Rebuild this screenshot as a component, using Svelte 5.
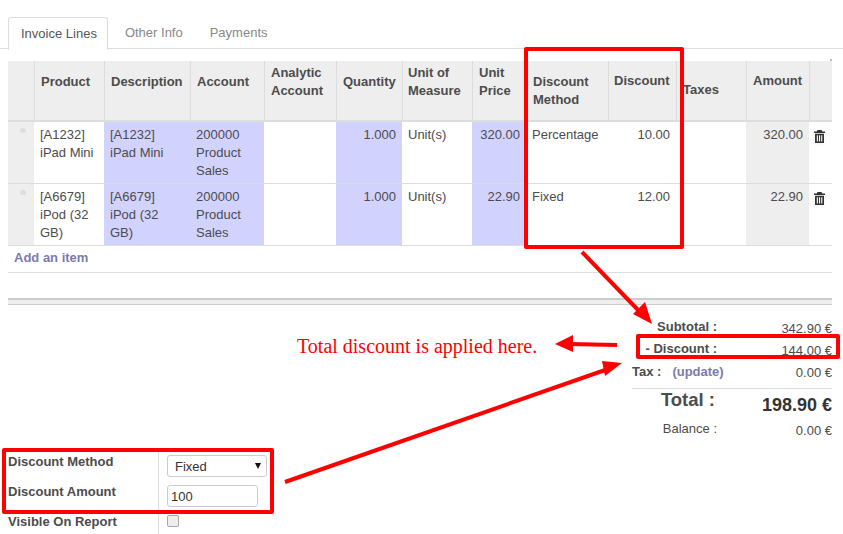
<script lang="ts">
const rows = [
  { code: "[A1232]", name: "iPad Mini", method: "Percentage", disc: "10.00", price: "320.00", amount: "320.00" },
  { code: "[A6679]", name: "iPod (32 GB)", method: "Fixed", disc: "12.00", price: "22.90", amount: "22.90" },
];
</script>

<div class="page">
  <ul class="tabs">
    <li class="active">Invoice Lines</li>
    <li>Other Info</li>
    <li>Payments</li>
  </ul>

  <table class="lines">
    <colgroup>
      <col style="width:26px" /><col style="width:70px" /><col style="width:86px" /><col style="width:74px" />
      <col style="width:72px" /><col style="width:66px" /><col style="width:70px" /><col style="width:54px" />
      <col style="width:82px" /><col style="width:68px" /><col style="width:70px" /><col style="width:63px" />
      <col style="width:23px" />
    </colgroup>
    <thead>
      <tr>
        <th></th>
        <th class="h1">Product</th>
        <th class="h1">Description</th>
        <th class="h1">Account</th>
        <th class="h2">Analytic Account</th>
        <th class="h1">Quantity</th>
        <th class="h2 tight">Unit of Measure</th>
        <th class="h2">Unit Price</th>
        <th class="h1">Discount Method</th>
        <th class="h3 tight">Discount</th>
        <th class="h4">Taxes</th>
        <th class="h3">Amount</th>
        <th></th>
      </tr>
    </thead>
    <tbody>
      {#each rows as row}
        <tr>
          <td class="handle"><span class="dot"></span></td>
          <td>{row.code} {row.name}</td>
          <td class="req">{row.code} {row.name}</td>
          <td class="req">200000 Product Sales</td>
          <td></td>
          <td class="req num">1.000</td>
          <td>Unit(s)</td>
          <td class="req num price">{row.price}</td>
          <td class="method">{row.method}</td>
          <td class="num">{row.disc}</td>
          <td></td>
          <td class="num amount">{row.amount}</td>
          <td class="del">
            <svg width="11" height="13" viewBox="0 0 11 13" aria-hidden="true">
              <path fill="#333" fill-rule="evenodd" d="M3.500 0h4l.8 1.500H11V3H0V1.500h2.700zM1 3.800h9V13H1zM2.800 5.200v6.400h1.100V5.200zm2.200 0v6.400h1.100V5.200zm2.200 0v6.400h1.100V5.200z" />
            </svg>
          </td>
        </tr>
      {/each}
    </tbody>
  </table>
  <div class="add-row"><span>Add an item</span></div>

  <div class="separator"></div>

  <div class="totals">
    <div class="label bold">Subtotal :</div><div class="value">342.90 €</div>
    <div class="label bold">- Discount :</div><div class="value">144.00 €</div>
    <div class="label bold tax">Tax : <span class="update">(update)</span></div><div class="value">0.00 €</div>
    <div class="label bold grand">Total :</div><div class="value grand-value">198.90 €</div>
    <div class="label">Balance :</div><div class="value">0.00 €</div>
  </div>

  <div class="form">
    <div class="form-label">Discount Method</div>
    <div class="form-field">
      <div class="select-wrap">
        <select><option>Fixed</option></select>
      </div>
    </div>
    <div class="form-label">Discount Amount</div>
    <div class="form-field"><input type="text" value="100" /></div>
    <div class="form-label">Visible On Report</div>
    <div class="form-field"><span class="check"></span></div>
  </div>

  <!-- screenshot annotations drawn on top of the form -->
  <svg class="marks" width="843" height="534" viewBox="0 0 843 534" aria-hidden="true">
    <g fill="none" stroke="#fe0000" stroke-width="4" stroke-linejoin="round">
      <rect x="526" y="49" width="156" height="198" />
      <rect x="638" y="336" width="200" height="21" />
      <rect x="4" y="450" width="268" height="62" />
      <path d="M582 252 640 312" />
      <path d="M617 345 570 344" />
      <path d="M285 482 608 369" />
    </g>
    <g fill="#fe0000">
      <path d="M652 324 633 314 645 302z" />
      <path d="M555 344 573 335 573 352z" />
      <path d="M622 363 602 361 605 376z" />
    </g>
  </svg>
  <div class="note">Total discount is applied here.</div>
</div>

<style>
:global(body) {
  margin: 0;
  background: #fff;
}

.page {
  position: relative;
  width: 843px;
  height: 534px;
  overflow: hidden;
  font-family: "Liberation Sans", Arial, sans-serif;
  font-size: 13px;
  line-height: 18px;
  color: #4c4c4c;
}

.tabs {
  display: flex;
  gap: 1px;
  list-style: none;
  margin: 0;
  padding: 17px 0 0 8px;
  height: 31px;
  border-bottom: 1px solid #ddd;
}
.tabs li {
  padding: 7px 13px 0;
  height: 24px;
  color: #888;
}
.tabs li.active {
  height: 25px;
  padding: 7px 10px 0 12px;
  margin-right: 3px;
  color: #555;
  background: #fff;
  border: 1px solid #ddd;
  border-bottom: none;
  border-radius: 3px 3px 0 0;
}

.lines {
  table-layout: fixed;
  width: 824px;
  margin: 12px 0 0 8px;
  border-collapse: separate;
  border-spacing: 0;
}
.lines th {
  box-sizing: border-box;
  height: 61px;
  padding: 2px 6px 0 6px;
  vertical-align: top;
  text-align: left;
  background: #eee;
  border-left: 1px solid #ddd;
  border-bottom: 2px solid #ddd;
  font-weight: bold;
}
.lines th:first-child {
  border-left: none;
}
.lines th:last-child {
  position: relative;
}
.lines th:last-child::after {
  content: "";
  position: absolute;
  top: -2px;
  right: 0;
  width: 2px;
  height: 2px;
  background: #bbb;
}
.lines th.h1 { padding-top: 12px; }
.lines th.h2 { padding-top: 3px; }
.lines th.h3 { padding-top: 11px; }
.lines th.h4 { padding-top: 20px; }
.lines th.tight { padding-left: 5px; }

.lines td {
  padding: 4px 6px 3px;
  vertical-align: top;
  border-bottom: 1px solid #ddd;
}
.lines td.req { background: #d2d2ff; }
.lines td.num { text-align: right; }
.lines td.price { padding-right: 6px; }
.lines td.method { padding-left: 6px; }
.lines td.amount { background: #eee; }
.lines td.handle {
  background: #eee;
  text-align: center;
  padding: 6px 0 0 4px;
}
.dot {
  display: block;
  width: 6px;
  height: 5px;
  margin: 0 auto;
  border-radius: 50%;
  background: #ddd;
}
.lines td.del {
  padding: 8px 0 0 5px;
}
.del svg {
  display: block;
  box-shadow: 0 1px 3px rgba(0, 0, 0, 0.06);
}

.add-row {
  box-sizing: border-box;
  height: 27px;
  margin-left: 8px;
  width: 824px;
  padding: 3px 6px 0;
  border-bottom: 1px solid #ddd;
  font-weight: bold;
  color: #7c7bad;
}

.separator {
  box-sizing: border-box;
  width: 824px;
  height: 7px;
  margin: 25px 0 0 8px;
  background: #eee;
  border-top: 2px solid #ccc;
  border-bottom: 1px solid #ccc;
}

.totals {
  display: grid;
  grid-template-columns: 85px 115px;
  grid-template-rows: 22px 22px 26px 32px 26px;
  width: 200px;
  margin: 13px 11px 0 auto;
}
.label {
  text-align: right;
}
.bold {
  font-weight: bold;
}
.value {
  text-align: right;
  padding-top: 2px;
}
.tax {
  display: flex;
  gap: 11px;
  padding-top: 1px;
  text-align: left;
  white-space: nowrap;
}
.update {
  color: #7c7bad;
}
.grand {
  font-size: 18.500px;
  line-height: 22px;
  padding-right: 2px;
  border-top: 1px solid #ddd;
}
.grand-value {
  font-size: 18px;
  font-weight: bold;
  line-height: 24px;
  padding-top: 4px;
  border-top: 1px solid #ddd;
  color: #333;
}

.form {
  display: grid;
  grid-template-columns: 150px 200px;
  grid-auto-rows: 30px;
  margin: 6px 0 0 8px;
  font-size: 13px;
}
.form-label {
  font-weight: bold;
  padding-top: 1px;
}
.form-field {
  padding: 3px 0 0 8px;
  border-left: 1px solid #ddd;
}
.select-wrap {
  position: relative;
  width: 100px;
}
.select-wrap::after {
  content: "";
  position: absolute;
  right: 6px;
  top: 8px;
  border: 3.500px solid transparent;
  border-top: 6px solid #111;
  border-bottom: none;
}
select {
  appearance: none;
  box-sizing: border-box;
  display: block;
  width: 100px;
  height: 22px;
  padding: 0 7px;
  background: #fff;
  border: 1px solid #ccc;
  border-radius: 3px;
  color: #333;
  font: 13px "Liberation Sans", Arial, sans-serif;
}
input {
  box-sizing: border-box;
  display: block;
  width: 91px;
  height: 22px;
  padding: 0 3px;
  border: 1px solid #ccc;
  border-radius: 3px;
  color: #333;
  font: 13px "Liberation Sans", Arial, sans-serif;
}
.check {
  display: block;
  box-sizing: border-box;
  width: 12px;
  height: 12px;
  border: 1px solid #aaa;
  border-radius: 2px;
  background: #eee;
}

.marks {
  position: absolute;
  left: 0;
  top: 0;
}
.note {
  position: absolute;
  left: 297px;
  top: 333px;
  font-family: "Liberation Serif", "Times New Roman", serif;
  font-size: 20px;
  line-height: 26px;
  color: #fe0000;
  white-space: nowrap;
}
</style>
